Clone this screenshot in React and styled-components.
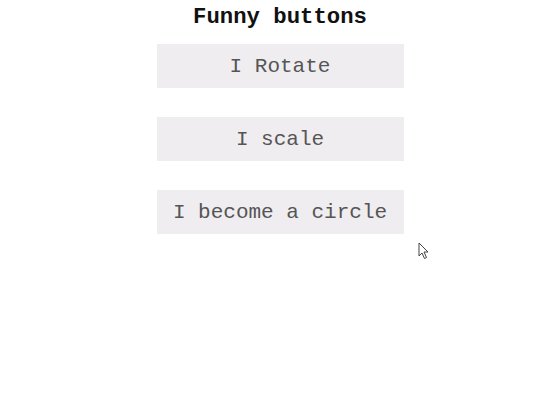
import styled, { createGlobalStyle } from 'styled-components';

const GlobalStyle = createGlobalStyle`
  body {
    margin: 0;
    background: #ffffff;
    font-family: "Liberation Mono", "Courier New", monospace;
  }
`;

const buttons = ['I Rotate', 'I scale', 'I become a circle'];

function App() {
  return (
    <>
      <GlobalStyle />
      <Page>
        <Title>Funny buttons</Title>
        <ButtonList>
          {buttons.map((label) => (
            <FunnyButton key={label}>{label}</FunnyButton>
          ))}
        </ButtonList>
        <Cursor width="12" height="18" viewBox="0 0 12 18">
          <path d="M1 1 L1 14 L4 11 L6.5 16.5 L8.5 15.5 L6 10 L10 10 Z" fill="#fff" stroke="#444" strokeWidth="1" strokeLinejoin="round" />
        </Cursor>
      </Page>
    </>
  );
}
export default App;

const Page = styled.div`
  position: relative;
  width: 555px;
  height: 408px;
  display: flex;
  flex-direction: column;
  align-items: center;
  padding-left: 5px;
  box-sizing: border-box;
`;

const Title = styled.h1`
  margin: 4px 0 14px 0;
  font-size: 22.3px;
  line-height: 26px;
  font-weight: bold;
  color: #111;
`;

const ButtonList = styled.div`
  display: flex;
  flex-direction: column;
  gap: 29px;
`;

const FunnyButton = styled.button`
  width: 247px;
  height: 44px;
  border: none;
  background: #efedf0;
  font-family: "Liberation Mono", "Courier New", monospace;
  font-size: 21px;
  color: #555;
  padding: 0;
  cursor: pointer;
`;

const Cursor = styled.svg`
  position: absolute;
  left: 418px;
  top: 242px;
`;
